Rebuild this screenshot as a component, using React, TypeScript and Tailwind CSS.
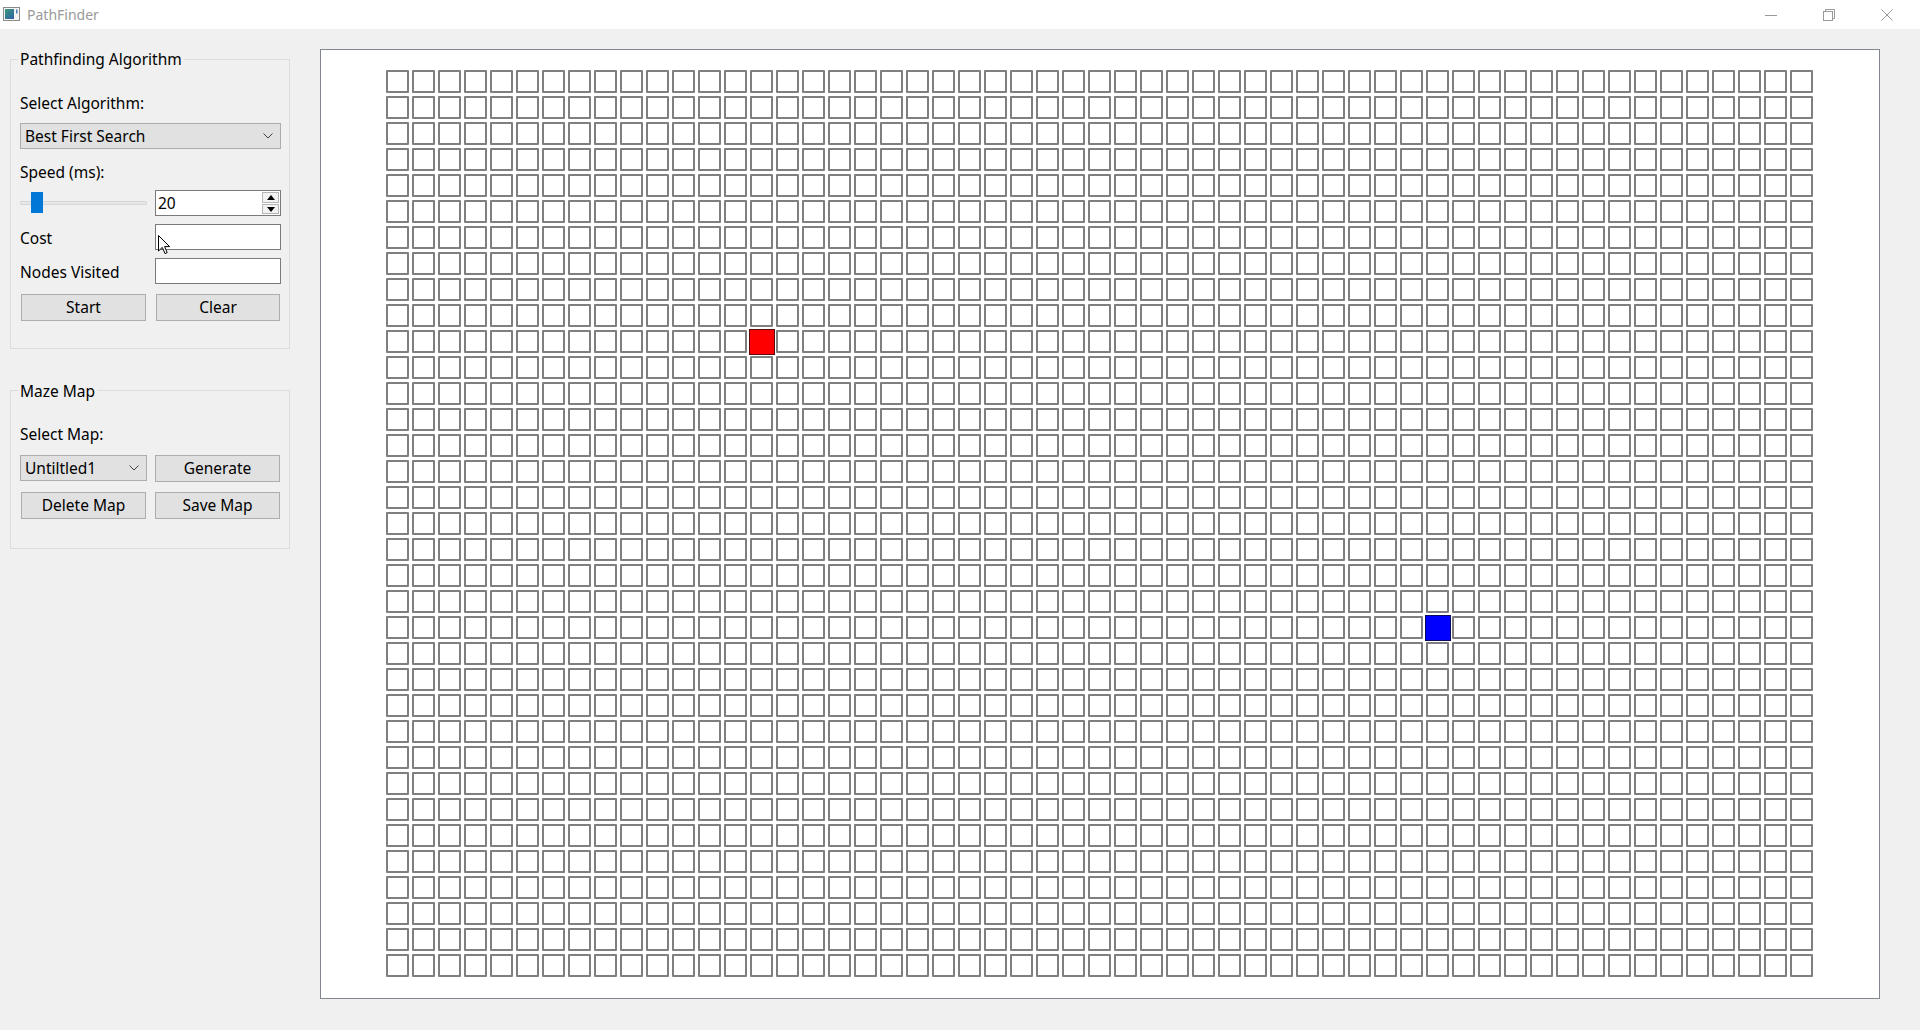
import React from 'react';

const ROWS = 35;
const COLS = 55;
const START = { r: 10, c: 14 };
const GOAL = { r: 21, c: 40 };

const FONT = { fontFamily: '"Noto Sans", "Open Sans", Arial, sans-serif' };

function Chevron() {
  return (
    <svg width="10" height="6" viewBox="0 0 10 6" className="shrink-0">
      <path d="M0.5 0.5 L5 5 L9.5 0.5" fill="none" stroke="#404040" strokeWidth="1" />
    </svg>
  );
}

function WinButton({ children }: { children: React.ReactNode }) {
  return <div className="w-[58px] h-[29px] flex items-center justify-center">{children}</div>;
}

function TitleBar() {
  return (
    <div className="h-[29px] bg-white flex items-center">
      <svg width="17" height="14" viewBox="0 0 17 14" className="ml-[3px] mt-[-1px]">
        <defs>
          <linearGradient id="ic" x1="0" y1="0" x2="1" y2="1">
            <stop offset="0" stopColor="#3a9a7a" />
            <stop offset="1" stopColor="#2f5fa8" />
          </linearGradient>
        </defs>
        <rect x="0.5" y="0.5" width="16" height="13" fill="#f4f4f4" stroke="#8a8a8a" />
        <rect x="2" y="2" width="9" height="10" fill="url(#ic)" />
        <rect x="13" y="2.5" width="1.5" height="4" fill="#4a7ab8" />
      </svg>
      <span className="ml-[7px] text-[14px] text-[#9a9a9a]">PathFinder</span>
      <div className="ml-auto mr-[4px] flex">
        <WinButton>
          <svg width="12" height="12" viewBox="0 0 12 12">
            <path d="M0 6.5 H12" stroke="#999" strokeWidth="1" />
          </svg>
        </WinButton>
        <WinButton>
          <svg width="12" height="12" viewBox="0 0 12 12">
            <rect x="0.5" y="2.5" width="9" height="9" fill="none" stroke="#999" />
            <path d="M2.5 2.5 V0.5 H11.5 V9.5 H9.5" fill="none" stroke="#999" />
          </svg>
        </WinButton>
        <WinButton>
          <svg width="12" height="12" viewBox="0 0 12 12">
            <path d="M0.5 0.5 L11.5 11.5 M11.5 0.5 L0.5 11.5" stroke="#999" strokeWidth="1" />
          </svg>
        </WinButton>
      </div>
    </div>
  );
}

function Button({ label, className = '' }: { label: string; className?: string }) {
  return (
    <div
      className={`h-[27px] pt-[2px] bg-[#e1e1e1] border border-[#adadad] flex items-center justify-center text-[15.5px] text-black ${className}`}
    >
      {label}
    </div>
  );
}

function Combo({ value, className = '' }: { value: string; className?: string }) {
  return (
    <div
      className={`h-[26px] bg-[#e1e1e1] border border-[#adadad] flex items-center pl-[4px] pr-[7px] text-[15.5px] text-black ${className}`}
    >
      <span className="flex-1 pt-[2px]">{value}</span>
      <Chevron />
    </div>
  );
}

function Field({ children }: { children?: React.ReactNode }) {
  return <div className="relative h-[26px] bg-white border border-[#7a7a7a]">{children}</div>;
}

function Cursor() {
  return (
    <svg width="13" height="20" viewBox="0 0 13 20" className="absolute left-[2px] top-[10px]">
      <path
        d="M0.5 0.5 V16 L4.3 12.4 L7 18.6 L9.2 17.6 L6.6 11.6 H11.6 Z"
        fill="#fff"
        stroke="#000"
        strokeWidth="1"
        strokeLinejoin="round"
      />
    </svg>
  );
}

function Spin() {
  return (
    <div className="h-[26px] bg-white border border-[#7a7a7a] flex items-center pl-[2px] pr-[1px] text-[15.5px] text-black">
      <span className="flex-1 pt-[2px]">20</span>
      <div className="flex flex-col gap-[1px]">
        <div className="w-[17px] h-[11px] border border-[#b5b5b5] bg-[#f2f2f2] flex items-center justify-center">
          <svg width="8" height="5" viewBox="0 0 8 5">
            <path d="M4 0 L8 5 H0 Z" fill="#000" />
          </svg>
        </div>
        <div className="w-[17px] h-[10px] border border-[#b5b5b5] bg-[#f2f2f2] flex items-center justify-center">
          <svg width="8" height="5" viewBox="0 0 8 5">
            <path d="M0 0 H8 L4 5 Z" fill="#000" />
          </svg>
        </div>
      </div>
    </div>
  );
}

function Slider() {
  return (
    <div className="relative h-[26px] flex items-center">
      <div className="w-[128px] h-[4px] bg-[#e7e7e7] border border-[#d6d6d6] rounded-[1px]" />
      <div className="absolute left-[11px] top-[2px] w-[12px] h-[21px] bg-[#0078d7]" />
    </div>
  );
}

function Group({ title, className = '', children }: { title: string; className?: string; children: React.ReactNode }) {
  return (
    <fieldset className={`border border-[#dcdcdc] pl-[9px] pr-[8px] ${className}`}>
      <legend className="-ml-[2px] px-[2px] text-[15.5px] leading-[20px] text-black">{title}</legend>
      {children}
    </fieldset>
  );
}

function Sidebar() {
  return (
    <div className="w-[280px] ml-[10px] shrink-0 text-[15.5px]">
      <Group title="Pathfinding Algorithm" className="pb-[27px]">
        <div className="mt-[24px] h-[20px] leading-[20px]">Select Algorithm:</div>
        <Combo value="Best First Search" className="mt-[10px]" />
        <div className="mt-[13px] h-[20px] leading-[20px]">Speed (ms):</div>
        <div className="mt-[8px] grid grid-cols-[127px_126px] gap-x-[8px]">
          <Slider />
          <Spin />
        </div>
        <div className="mt-[8px] grid grid-cols-[127px_126px] gap-x-[8px] items-center">
          <span className="pt-[3px]">Cost</span>
          <Field>
            <Cursor />
          </Field>
        </div>
        <div className="mt-[8px] grid grid-cols-[127px_126px] gap-x-[8px] items-center">
          <span className="pt-[3px]">Nodes Visited</span>
          <Field />
        </div>
        <div className="mt-[9px] grid grid-cols-[127px_126px] gap-x-[8px]">
          <Button label="Start" className="mx-[1px]" />
          <Button label="Clear" className="mx-[1px]" />
        </div>
      </Group>

      <Group title="Maze Map" className="mt-[32px] pb-[29px]">
        <div className="mt-[23px] h-[20px] leading-[20px]">Select Map:</div>
        <div className="mt-[11px] grid grid-cols-[127px_126px] gap-x-[8px] items-start">
          <Combo value="Untiltled1" />
          <Button label="Generate" className="mr-[1px]" />
        </div>
        <div className="mt-[10px] grid grid-cols-[127px_126px] gap-x-[8px]">
          <Button label="Delete Map" className="ml-[1px] mr-[1px]" />
          <Button label="Save Map" className="mr-[1px]" />
        </div>
      </Group>
    </div>
  );
}

function Cell({ r, c }: { r: number; c: number }) {
  if (r === START.r && c === START.c) {
    return <div className="w-[26px] h-[26px] -ml-[1px] -mt-[1px] bg-[#ff0000] border border-[#5c0a0a]" />;
  }
  if (r === GOAL.r && c === GOAL.c) {
    return <div className="w-[26px] h-[26px] -ml-[1px] -mt-[1px] bg-[#0000ff] border border-[#0a0a5c]" />;
  }
  return <div className="w-[23px] h-[23px] border-2 border-[#7f7f7f] rounded-[1px]" />;
}

function Board() {
  const cells = [];
  for (let r = 0; r < ROWS; r++) {
    for (let c = 0; c < COLS; c++) {
      cells.push(<Cell key={`${r}-${c}`} r={r} c={c} />);
    }
  }
  return (
    <div className="ml-[30px] w-[1560px] h-[950px] bg-white border border-[#828790] pl-[65px] pt-[20px]">
      <div className="grid grid-cols-[repeat(55,23px)] auto-rows-[23px] gap-[3px]">{cells}</div>
    </div>
  );
}

export default function App() {
  return (
    <div className="w-[1920px] h-[1030px] bg-[#f0f0f0] overflow-hidden text-black" style={FONT}>
      <TitleBar />
      <div className="flex pt-[20px]">
        <Sidebar />
        <Board />
      </div>
    </div>
  );
}
